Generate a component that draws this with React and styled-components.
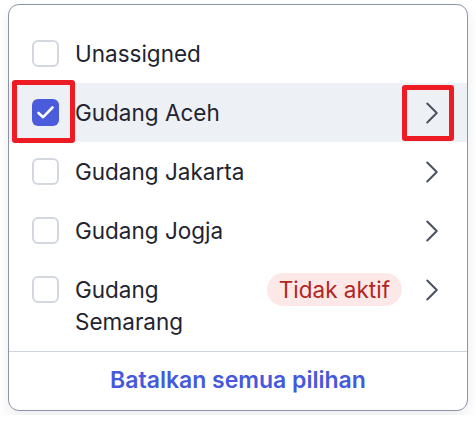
import React, { useState } from "react";
import styled, { createGlobalStyle } from "styled-components";
import { ChevronRight } from "lucide-react";

const GlobalStyle = createGlobalStyle`
  body {
    margin: 0;
    padding: 4px 8px;
    background: #ffffff;
    font-family: Inter, "Noto Sans", sans-serif;
  }
`;

const Card = styled.div`
  width: 460px;
  box-sizing: border-box;
  border: 1.5px solid #8a94a6;
  border-radius: 11px;
  background: #ffffff;
  box-shadow: 0 6px 14px rgba(15, 23, 42, 0.08);
  overflow: hidden;
`;

const List = styled.div`
  padding-top: 19px;
  display: flex;
  flex-direction: column;
`;

const Row = styled.div`
  display: flex;
  align-items: flex-start;
  gap: 16px;
  padding: 13.5px 16px 13.5px 23px;
  background: ${({ $active }) => ($active ? "#edf0f4" : "transparent")};
  cursor: pointer;
`;

const Slot = styled.span`
  position: relative;
  height: 32px;
  display: flex;
  align-items: center;
  flex-shrink: 0;
`;

const Box = styled.span`
  width: 27px;
  height: 27px;
  box-sizing: border-box;
  border-radius: 6px;
  border: ${({ $checked }) => ($checked ? "none" : "2px solid #d3d8e0")};
  background: ${({ $checked }) => ($checked ? "#4a5bdc" : "#ffffff")};
  display: flex;
  align-items: center;
  justify-content: center;
`;

const Label = styled.span`
  flex: 1;
  min-width: 0;
  font-size: 22.5px;
  line-height: 32px;
  color: #1f2430;
`;

const Badge = styled.span`
  height: 33px;
  margin-top: -0.5px;
  padding: 0 12px;
  border-radius: 17px;
  background: #fde8e8;
  color: #b0261f;
  font-size: 22.5px;
  line-height: 33px;
  white-space: nowrap;
  flex-shrink: 0;
  margin-right: -5px;
`;

const Arrow = styled(ChevronRight)`
  color: #4d5565;
`;

const Mark = styled.span`
  position: absolute;
  top: ${({ $t }) => $t}px;
  left: ${({ $l }) => $l}px;
  right: ${({ $r }) => $r}px;
  bottom: ${({ $b }) => $b}px;
  border: 5px solid #ed1c24;
  border-radius: 3px;
  pointer-events: none;
`;

const Footer = styled.div`
  border-top: 1px solid #cfd6e0;
  padding: 15px 0 17px;
  text-align: center;
`;

const Clear = styled.button`
  border: none;
  background: none;
  padding: 0;
  font-family: inherit;
  font-size: 23px;
  line-height: 26px;
  font-weight: 600;
  color: #4659dc;
  cursor: pointer;
`;

const warehouses = [
  { name: "Unassigned", sub: false },
  { name: "Gudang Aceh", sub: true },
  { name: "Gudang Jakarta", sub: true },
  { name: "Gudang Jogja", sub: true },
  { name: "Gudang Semarang", sub: true, inactive: true },
];

const Check = () => (
  <svg width="27" height="27" viewBox="0 0 27 27" fill="none">
    <path
      d="M6.5 14l4.6 4.2L20.5 8.5"
      stroke="#ffffff"
      strokeWidth="2.6"
      strokeLinecap="round"
      strokeLinejoin="round"
    />
  </svg>
);

export default function App() {
  const [selected, setSelected] = useState(["Gudang Aceh"]);

  const toggle = (name) =>
    setSelected((s) =>
      s.includes(name) ? s.filter((n) => n !== name) : [...s, name]
    );

  return (
    <>
      <GlobalStyle />
      <Card>
        <List>
          {warehouses.map((w) => {
            const checked = selected.includes(w.name);
            return (
              <Row key={w.name} $active={checked} onClick={() => toggle(w.name)}>
                <Slot>
                  <Box $checked={checked}>{checked && <Check />}</Box>
                  {checked && <Mark $t={-17} $l={-20} $r={-16} $b={-14} />}
                </Slot>
                <Label>{w.name}</Label>
                {w.inactive && <Badge>Tidak aktif</Badge>}
                {w.sub && (
                  <Slot>
                    <Arrow size={38} strokeWidth={1.3} />
                    {checked && <Mark $t={-12} $l={-11} $r={-3} $b={-12} />}
                  </Slot>
                )}
              </Row>
            );
          })}
        </List>
        <Footer>
          <Clear onClick={() => setSelected([])}>Batalkan semua pilihan</Clear>
        </Footer>
      </Card>
    </>
  );
}
